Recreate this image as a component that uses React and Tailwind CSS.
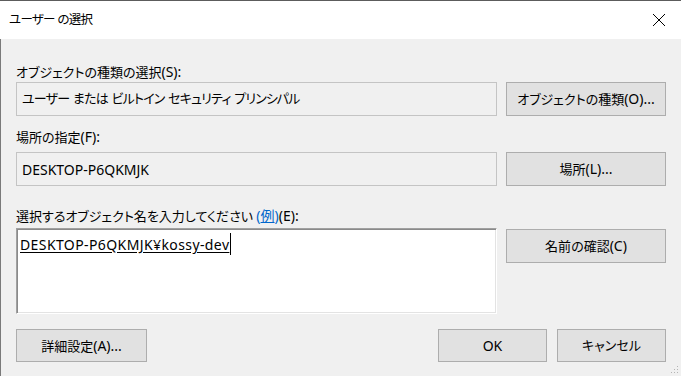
import React from "react";

const font = "font-['Noto_Sans','Noto_Sans_CJK_JP',sans-serif] [font-feature-settings:'palt']";

function L({ children }) {
  return <span className="text-[14px]">{children}</span>;
}

function Btn({ children, className = "" }) {
  return (
    <div
      className={`flex items-center justify-center bg-[#e1e1e1] border border-[#adadad] text-[13px] text-black ${className}`}
    >
      <span>{children}</span>
    </div>
  );
}

function Label({ children, className = "" }) {
  return (
    <div className={`h-[20px] leading-[20px] text-[13px] text-black ${className}`}>{children}</div>
  );
}

function ReadBox({ children, className = "" }) {
  return (
    <div className={`w-[481px] h-[34px] border border-[#c4c4c4] bg-[#f0f0f0] flex items-center pl-[5px] text-[13px] text-black ${className}`}>
      {children}
    </div>
  );
}

export default function App() {
  return (
    <div className={`relative w-[681px] h-[376px] bg-[#f0f0f0] border-t border-[#5c5c5c] flex flex-col overflow-hidden ${font}`}>
      {/* Title bar */}
      <div className="h-[38px] bg-white flex items-center justify-between pl-[9px] pr-[14px] shrink-0">
        <span className="text-[12.5px] tracking-[-0.7px] text-black pt-px">ユーザー の選択</span>
        <svg width="14" height="14" viewBox="0 0 14 14" className="mr-[1px]">
          <path d="M1 1 L13 13 M13 1 L1 13" stroke="#000" strokeWidth="1" fill="none" />
        </svg>
      </div>

      {/* Body */}
      <div className="flex-1 border-l border-[#7a7a7a] pl-[15px] pr-[15px] pt-[23px] flex flex-col">
        <Label>
          オブジェクトの種類の選択<L>(S):</L>
        </Label>
        <div className="flex gap-[9px]">
          <ReadBox className="tracking-[-0.8px] [word-spacing:1px]">ユーザー または ビルトイン セキュリティ プリンシパル</ReadBox>
          <Btn className="w-[160px] h-[34px]">
            オブジェクトの種類<L>(O)...</L>
          </Btn>
        </div>

        <Label className="mt-[11px]">
          場所の指定<L>(F):</L>
        </Label>
        <div className="flex gap-[9px] mt-[5px]">
          <ReadBox>
            <L>DESKTOP-P6QKMJK</L>
          </ReadBox>
          <Btn className="w-[160px] h-[34px]">
            場所<L>(L)...</L>
          </Btn>
        </div>

        <Label className="mt-[20px]">
          選択するオブジェクト名を入力してください{" "}
          <L>
            <span className="text-[#0066cc]">
              (<span className="underline">例</span>)
            </span>
            (E):
          </L>
        </Label>
        <div className="flex gap-[9px] mt-[2px] items-start">
          <div className="w-[481px] h-[86px] bg-white border-t border-l border-[#a0a0a0] border-b border-r border-b-white border-r-white shadow-[inset_1px_1px_0_#8a8a8a,inset_-1px_-1px_0_#e3e3e3] pl-[3px] pt-[4px]">
            <div className="flex items-center h-[22px] text-[14px] text-black">
              <span className="underline underline-offset-2 tracking-[0.4px]">DESKTOP-P6QKMJK¥kossy-dev</span>
              <span className="inline-block w-px h-[22px] bg-black ml-px" />
            </div>
          </div>
          <Btn className="w-[160px] h-[34px] mt-[1px]">
            名前の確認<L>(C)</L>
          </Btn>
        </div>

        <div className="flex mt-[15px]">
          <Btn className="w-[131px] h-[33px]">
            詳細設定<L>(A)...</L>
          </Btn>
          <div className="flex-1" />
          <Btn className="w-[109px] h-[33px] border-[#0078d7]">
            <L>OK</L>
          </Btn>
          <Btn className="w-[109px] h-[33px] ml-[10px]">キャンセル</Btn>
        </div>
      </div>

      {/* resize grip */}
      <svg className="absolute right-[2px] bottom-[2px]" width="8" height="8" viewBox="0 0 8 8">
        <rect x="6" y="0" width="1" height="1" fill="#b4b4b4" />
        <rect x="3" y="3" width="1" height="1" fill="#b4b4b4" />
        <rect x="6" y="3" width="1" height="1" fill="#b4b4b4" />
        <rect x="0" y="6" width="1" height="1" fill="#b4b4b4" />
        <rect x="3" y="6" width="1" height="1" fill="#b4b4b4" />
        <rect x="6" y="6" width="1" height="1" fill="#b4b4b4" />
      </svg>
    </div>
  );
}
